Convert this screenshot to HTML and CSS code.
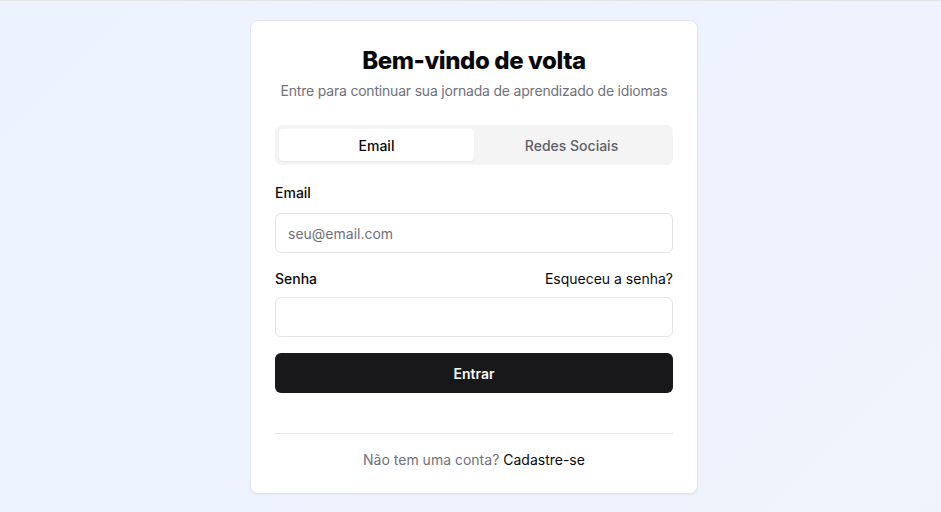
FILE: index.html
```html
<!DOCTYPE html>
<html lang="pt">
<head>
<meta charset="utf-8">
<title>Entrar</title>
<link rel="stylesheet" href="styles.css">
</head>
<body>
<div class="page">
  <div class="card">
    <div class="header">
      <h1 class="title">Bem-vindo de volta</h1>
      <p class="subtitle">Entre para continuar sua jornada de aprendizado de idiomas</p>
    </div>
    <div class="tabs">
      <button class="tab active">Email</button>
      <button class="tab">Redes Sociais</button>
    </div>
    <form class="form">
      <div class="field">
        <label class="label label-email">Email</label>
        <input class="input input-email" type="email" placeholder="seu@email.com">
      </div>
      <div class="field">
        <div class="label-row">
          <label class="label">Senha</label>
          <a class="forgot" href="#">Esqueceu a senha?</a>
        </div>
        <input class="input input-pass" type="password">
      </div>
      <button class="submit" type="button">Entrar</button>
    </form>
    <div class="divider"></div>
    <p class="footer">Não tem uma conta? <a class="signup" href="#">Cadastre-se</a></p>
  </div>
</div>
</body>
</html>
```
FILE: styles.css
```css
* { box-sizing: border-box; }
html, body { margin: 0; padding: 0; }
body {
  font-family: Inter, "Noto Sans", sans-serif;
  color: #09090b;
  min-height: 100vh;
  background: linear-gradient(135deg, #ecf3ff 0%, #eef3fe 60%, #f1f3fc 100%);
  border-top: 1px solid #e4e6ea;
}
.page {
  display: flex;
  justify-content: center;
  padding-top: 19px;
  padding-left: 7px;
}
.card {
  width: 448px;
  background: #ffffff;
  border: 1px solid #e4e4e7;
  border-radius: 8px;
  padding: 24px 24px 23px;
  box-shadow: 0 1px 2px rgba(0,0,0,0.05);
}
.header { text-align: center; }
.title {
  margin: 0;
  font-size: 24px;
  line-height: 32px;
  font-weight: 800;
  letter-spacing: -0.4px;
}
.subtitle {
  margin: 4px 0 0;
  font-size: 14px;
  line-height: 20px;
  color: #6f717a;
  white-space: nowrap;
  letter-spacing: -0.2px;
}
.tabs {
  margin-top: 24px;
  height: 40px;
  background: #f4f4f5;
  border-radius: 6px;
  padding: 4px;
  display: grid;
  grid-template-columns: 1fr 1fr;
}
.tab {
  font: inherit;
  font-size: 14px;
  font-weight: 500;
  border: 0;
  background: transparent;
  color: #5f5f68;
  border-radius: 4px;
  padding: 0;
}
.tab.active {
  background: #ffffff;
  color: #09090b;
  box-shadow: 0 1px 2px rgba(0,0,0,0.06);
}
.form { display: flex; flex-direction: column; }
.field { display: flex; flex-direction: column; }
.label {
  font-size: 14px;
  line-height: 20px;
  font-weight: 500;
}
.label-email { margin-top: 18px; margin-bottom: 10px; }
.label-row {
  margin-top: 16px;
  margin-bottom: 8px;
  display: flex;
  justify-content: space-between;
  align-items: center;
}
.forgot {
  font-size: 14px;
  line-height: 20px;
  color: #09090b;
  text-decoration: none;
}
.input {
  height: 40px;
  border: 1px solid #e4e4e7;
  border-radius: 6px;
  padding: 0 12px;
  font: inherit;
  font-size: 14px;
  background: #fff;
  color: #09090b;
}
.input::placeholder { color: #71717a; }
.submit {
  margin-top: 16px;
  height: 40px;
  border: 0;
  border-radius: 6px;
  background: #18181b;
  color: #fafafa;
  font: inherit;
  font-size: 14px;
  font-weight: 600;
}
.divider {
  margin-top: 40px;
  height: 1px;
  background: #e4e4e7;
}
.footer {
  margin: 16px 0 0;
  text-align: center;
  font-size: 14px;
  line-height: 20px;
  color: #71717a;
}
.signup { color: #09090b; text-decoration: none; }
```
